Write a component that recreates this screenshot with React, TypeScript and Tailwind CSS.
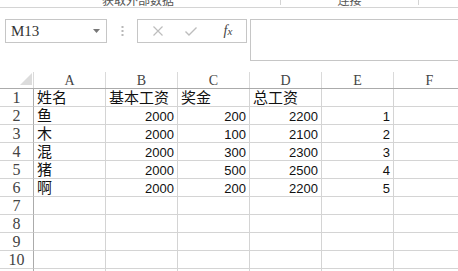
import React from 'react';

const cols = ['A', 'B', 'C', 'D', 'E', 'F'];
const rows: string[][] = [
  ['姓名', '基本工资', '奖金', '总工资', '', ''],
  ['鱼', '2000', '200', '2200', '1', ''],
  ['木', '2000', '100', '2100', '2', ''],
  ['混', '2000', '300', '2300', '3', ''],
  ['猪', '2000', '500', '2500', '4', ''],
  ['啊', '2000', '200', '2200', '5', ''],
  ['', '', '', '', '', ''],
  ['', '', '', '', '', ''],
  ['', '', '', '', '', ''],
  ['', '', '', '', '', ''],
  ['', '', '', '', '', ''],
];

const isNum = (s: string) => /^\d+$/.test(s);

function Cell({ v }: { v: string }) {
  const num = isNum(v);
  return (
    <div
      className={`w-[72px] h-[18px] shrink-0 border-r border-b border-[#d4d4d4] overflow-hidden whitespace-nowrap flex items-end ${
        num ? 'justify-end pr-[3px]' : 'justify-start pl-[3px]'
      }`}
    >
      {num ? (
        <span className="text-[13px] leading-[15px] text-[#111]" style={{ fontFamily: '"Liberation Sans", Arial, sans-serif' }}>
          {v}
        </span>
      ) : (
        <span className="text-[15px] leading-[16px] mb-[1px] text-[#111]" style={{ fontFamily: '"Noto Sans CJK SC", sans-serif' }}>
          {v}
        </span>
      )}
    </div>
  );
}

export default function App() {
  return (
    <div className="w-[458px] h-[271px] overflow-hidden bg-white flex flex-col">
      {/* ribbon strip (cut off) */}
      <div className="h-[8px] shrink-0 flex border-b border-[#d4d4d4] overflow-hidden text-[#555]" style={{ fontFamily: '"Noto Sans CJK SC", sans-serif' }}>
        <div className="w-[280px] shrink-0 flex justify-center pr-[4px] overflow-hidden">
          <span className="text-[12px] leading-[12px] -mt-[6px] whitespace-nowrap">获取外部数据</span>
        </div>
        <div className="w-[1px] h-[5px] bg-[#d4d4d4] shrink-0" />
        <div className="w-[137px] shrink-0 flex justify-center overflow-hidden">
          <span className="text-[12px] leading-[12px] -mt-[6px] whitespace-nowrap">连接</span>
        </div>
        <div className="w-[1px] h-[5px] bg-[#d4d4d4] shrink-0" />
        <div className="flex-1" />
      </div>

      {/* formula bar */}
      <div className="h-[64px] shrink-0 flex items-start pt-[11px]">
        <div className="ml-[5px] w-[102px] h-[24px] shrink-0 border border-[#c6c6c6] flex items-center pl-[5px] pr-[6px]">
          <span className="text-[15px] text-[#333] flex-1 leading-none" style={{ fontFamily: '"Liberation Serif", serif' }}>M13</span>
          <svg width="7" height="4" viewBox="0 0 7 4">
            <polygon points="0,0 7,0 3.5,4" fill="#777" />
          </svg>
        </div>
        <div className="w-[30px] h-[24px] shrink-0 flex items-center justify-center">
          <svg width="3" height="10" viewBox="0 0 3 10">
            <rect x="0.5" y="0" width="2" height="2" fill="#b8b8b8" />
            <rect x="0.5" y="4" width="2" height="2" fill="#b8b8b8" />
            <rect x="0.5" y="8" width="2" height="2" fill="#b8b8b8" />
          </svg>
        </div>
        <div className="w-[110px] h-[24px] shrink-0 border border-[#c6c6c6] flex items-center">
          <div className="w-[38px] flex justify-center pl-[2px]">
            <svg width="10" height="10" viewBox="0 0 10 10">
              <path d="M0.5 0.5 L9.5 9.5 M9.5 0.5 L0.5 9.5" stroke="#bdbdbd" strokeWidth="1.2" fill="none" />
            </svg>
          </div>
          <div className="w-[30px] flex justify-center">
            <svg width="12" height="9" viewBox="0 0 12 9">
              <path d="M0.5 4.5 L4 8 L11.5 0.5" stroke="#bdbdbd" strokeWidth="1.4" fill="none" />
            </svg>
          </div>
          <div className="flex-1 flex justify-center pl-[4px]">
            <span className="text-[14px] italic text-[#444] leading-none" style={{ fontFamily: '"Liberation Serif", serif' }}>
              f<span className="text-[11px]">x</span>
            </span>
          </div>
        </div>
        <div className="ml-[3px] w-[220px] h-[42px] shrink-0 border border-[#c6c6c6]" />
      </div>

      {/* column header */}
      <div className="h-[17px] shrink-0 flex border-b border-[#ababab]">
        <div className="w-[34px] h-full shrink-0 border-r border-[#dadada] relative">
          <svg className="absolute left-0 top-0" width="33" height="16" viewBox="0 0 33 16">
            <polygon points="32,1 32,13 20,13" fill="#dcdcdc" />
          </svg>
        </div>
        {cols.map((c) => (
          <div
            key={c}
            className="w-[72px] h-full shrink-0 border-r border-[#dadada] flex items-end justify-center text-[14px] leading-[15px] text-[#444]"
            style={{ fontFamily: '"Liberation Serif", serif' }}
          >
            {c}
          </div>
        ))}
      </div>

      {/* rows */}
      {rows.map((r, i) => (
        <div key={i} className="h-[18px] shrink-0 flex">
          <div
            className="w-[34px] h-[18px] shrink-0 border-r border-[#ababab] border-b border-b-[#d4d4d4] flex items-end justify-center text-[16px] leading-[17px] text-[#444]"
            style={{ fontFamily: '"Liberation Serif", serif' }}
          >
            {i + 1}
          </div>
          {r.map((v, j) => (
            <Cell key={j} v={v} />
          ))}
        </div>
      ))}
    </div>
  );
}
